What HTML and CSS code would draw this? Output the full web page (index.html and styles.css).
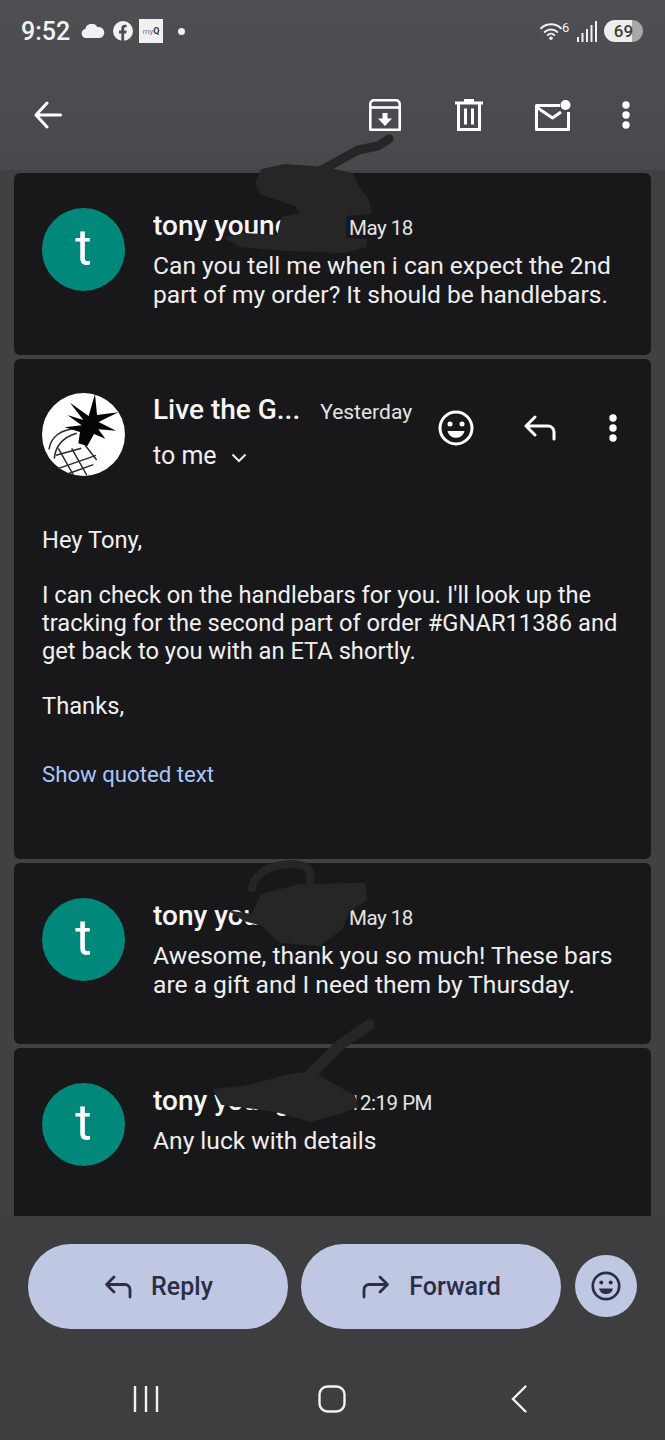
FILE: index.html
```html
<!DOCTYPE html>
<html lang="en">
<head>
<meta charset="utf-8">
<title>Email thread</title>
<link rel="stylesheet" href="styles.css">
</head>
<body>
<div class="screen">
  <header class="top">
    <div class="status">
      <span class="clock">9:52</span>
      <svg class="ic-cloud" viewBox="0 0 24 14"><path fill="#f2f2f2" d="M5 14a4.600 4.600 0 0 1-.6-9.100A6.400 6.400 0 0 1 16.300 3.100 5.600 5.600 0 0 1 19 14z"/></svg>
      <svg class="ic-fb" viewBox="0 0 20 20"><circle cx="10" cy="10" r="10" fill="#f2f2f2"/><path fill="#4d4d52" d="M8.300 20v-7.500H6V9.600h2.300V7.500c0-2.500 1.400-3.700 3.500-3.700.9 0 1.900.2 1.900.2v2.300h-1.100c-1.100 0-1.500.7-1.500 1.400v1.900h2.500l-.4 2.900h-2.100V20z"/></svg>
      <span class="myq"><span class="myq-a">my</span><span class="myq-b">Q</span></span>
      <span class="dot"></span>
      <span class="status-gap"></span>
      <svg class="ic-wifi" viewBox="0 0 24 20"><g fill="none" stroke="#f2f2f2" stroke-width="2.200" stroke-linecap="round"><path d="M1 7a16 16 0 0 1 22 0"/><path d="M5 11a10.500 10.500 0 0 1 14 0"/><path d="M8.500 14.500a5 5 0 0 1 7 0"/></g><circle cx="12" cy="18" r="2" fill="#f2f2f2"/></svg>
      <span class="wifi-num">6</span>
      <svg class="ic-signal" viewBox="0 0 20 21"><g fill="#f2f2f2"><rect x="0" y="16" width="2" height="5"/><rect x="4.500" y="12" width="2" height="9"/><rect x="9" y="8" width="2" height="13"/><rect x="13.500" y="4" width="2" height="17"/><rect x="18" y="0" width="2" height="21"/></g></svg>
      <span class="battery">69</span>
    </div>
    <div class="toolbar">
      <svg class="tool-back" viewBox="0 0 28 28"><path fill="none" stroke="#fff" stroke-width="3" stroke-linecap="round" stroke-linejoin="round" d="M26.500 14H2.500M13 2 2 14l11 12"/></svg>
      <span class="tool-fill"></span>
      <svg class="tool-archive" viewBox="0 0 32 32"><g fill="none" stroke="#fff" stroke-width="2.600" stroke-linejoin="round"><path d="M1.300 5a3.700 3.700 0 0 1 3.700-3.700h22A3.700 3.700 0 0 1 30.700 5v25.700H1.300z"/><path d="M1.300 8.500h29.400"/></g><path fill="#fff" d="M13.500 14h5v5.500h4.500L16 27l-7-7.500h4.500z"/></svg>
      <svg class="tool-trash" viewBox="0 0 28 32"><g fill="none" stroke="#fff" stroke-width="3"><path d="M3.500 5v25.500h21V5"/><path d="M0 4h28"/><path d="M10.500 9.500v16M17.500 9.500v16"/></g><rect x="9" y="0" width="10" height="4" fill="#fff"/></svg>
      <svg class="tool-mail" viewBox="0 0 36 31"><g fill="none" stroke="#fff" stroke-width="3" stroke-linejoin="round"><path d="M25 5.500H1.500v24h32V12"/><path d="M2 7.500 17.500 18 26 12"/></g><circle cx="30.500" cy="5" r="5" fill="#fff"/></svg>
      <svg class="tool-more" viewBox="0 0 8 28"><g fill="#fff"><circle cx="4" cy="4" r="3.700"/><circle cx="4" cy="14" r="3.700"/><circle cx="4" cy="24" r="3.700"/></g></svg>
    </div>
  </header>

  <main class="thread">
    <article class="card card-a">
      <div class="avatar">t</div>
      <div class="content">
        <div class="head"><span class="name name-fixed">tony young</span><span class="when">May 18</span></div>
        <p class="snippet">Can you tell me when i can expect the 2nd part of my order? It should be handlebars.</p>
      </div>
    </article>

    <article class="card card-open">
      <div class="open-head">
        <svg class="avatar-img" viewBox="36 39 249 249">
          <circle cx="160.500" cy="163.500" r="124.500" fill="#fff"/>
          <g fill="none" stroke="#2a2a2a" stroke-width="4.500">
            <path d="M57 208C62 172 92 146 142 146"/>
            <path d="M73 236C76 198 100 172 140 160"/>
            <path d="M78 226 154 205M84 266 198 226M112 282 190 254"/>
            <path d="M85 205 130 285M125 205 170 285M165 195 200 240"/>
          </g>
          <path fill="#050505" d="M195 42 201 105 265 97 206 126 258 152 205 148 226 176 192 162 172 198 145 190 150 156 104 142 155 136 112 105 160 120 120 68 176 108z"/>
        </svg>
        <div class="open-text">
          <div class="head-open"><span class="name">Live the G...</span><span class="when when-open">Yesterday</span></div>
          <div class="to-me">to me
            <svg class="chev" viewBox="0 0 16 10"><path fill="none" stroke="#eee" stroke-width="2" d="M1.500 1.500 8 8l6.500-6.500"/></svg>
          </div>
        </div>
        <svg class="open-emoji" viewBox="0 0 36 36"><circle cx="18" cy="18" r="16" fill="none" stroke="#fff" stroke-width="3"/><circle cx="12" cy="14" r="2.500" fill="#fff"/><circle cx="24" cy="14" r="2.500" fill="#fff"/><path fill="#fff" d="M9.500 21h17a8.700 8.700 0 0 1-17 0z"/></svg>
        <svg class="open-reply" viewBox="0 0 32 26"><path fill="none" stroke="#fff" stroke-width="3" stroke-linecap="round" stroke-linejoin="round" d="M11 2 2 11l9 9M2 11h22a6 6 0 0 1 6 6v7"/></svg>
        <svg class="open-more" viewBox="0 0 8 28"><g fill="#fff"><circle cx="4" cy="4" r="3.700"/><circle cx="4" cy="14" r="3.700"/><circle cx="4" cy="24" r="3.700"/></g></svg>
      </div>
      <div class="message">
        <p class="para">Hey Tony,</p>
        <p class="para">I can check on the handlebars for you. I'll look up the tracking for the second part of order #GNAR11386 and get back to you with an ETA shortly.</p>
        <p class="para">Thanks,</p>
        <p class="quoted">Show quoted text</p>
      </div>
    </article>

    <article class="card card-c">
      <div class="avatar">t</div>
      <div class="content">
        <div class="head"><span class="name name-fixed">tony young</span><span class="when">May 18</span></div>
        <p class="snippet">Awesome, thank you so much! These bars are a gift and I need them by Thursday.</p>
      </div>
    </article>

    <article class="card card-d">
      <div class="avatar">t</div>
      <div class="content">
        <div class="head"><span class="name name-fixed">tony young</span><span class="when">12:19 PM</span></div>
        <p class="snippet">Any luck with details</p>
      </div>
    </article>
  </main>

  <section class="actions">
    <button class="pill"><svg class="pill-ic" viewBox="0 0 28 26"><path fill="none" stroke="#2a2f45" stroke-width="2.800" stroke-linecap="round" stroke-linejoin="round" d="M10 3 2.500 10.500 10 18M3 10.500h18a5 5 0 0 1 5 5V23"/></svg>Reply</button>
    <button class="pill"><svg class="pill-ic" viewBox="0 0 28 26"><path fill="none" stroke="#2a2f45" stroke-width="2.800" stroke-linecap="round" stroke-linejoin="round" d="M18 3l7.500 7.500L18 18M25 10.500H7a5 5 0 0 0-5 5V23"/></svg>Forward</button>
    <div class="emoji-btn"><svg class="emoji-ic" viewBox="0 0 30 30"><circle cx="15" cy="15" r="13.200" fill="none" stroke="#2a2f45" stroke-width="2.700"/><circle cx="10.300" cy="11.500" r="2" fill="#2a2f45"/><circle cx="19.700" cy="11.500" r="2" fill="#2a2f45"/><path fill="#2a2f45" d="M8 17.500h14a7.200 7.200 0 0 1-14 0z"/></svg></div>
  </section>

  <nav class="navbar">
    <svg class="nav-recent" viewBox="0 0 26 28"><path stroke="#f2f2f2" stroke-width="2.400" d="M2 1v26M13 1v26M24 1v26"/></svg>
    <svg class="nav-home" viewBox="0 0 28 28"><rect x="1.500" y="1.500" width="25" height="25" rx="8" fill="none" stroke="#f2f2f2" stroke-width="2.400"/></svg>
    <svg class="nav-back" viewBox="0 0 16 28"><path fill="none" stroke="#f2f2f2" stroke-width="2.400" stroke-linecap="round" d="M14.500 1.500 2 14l12.500 12.500"/></svg>
  </nav>

  <svg class="scribble" viewBox="0 0 665 1440" aria-hidden="true">
    <g fill="#262627" stroke="#262627" stroke-linecap="round" stroke-linejoin="round">
      <path fill="none" stroke-width="9" d="M389 139 378 146 358 150 322 170 300 176"/>
      <path stroke-width="2" d="M262 170 285 165 325 168 352 174 358 187 368 200 371 213 346 215 345 239 366 240 366 246 345 252 285 250 240 246 226 238 245 234 278 236 282 218 300 214 296 205 262 194 256 184z"/>
      <path fill="none" stroke-width="8" d="M252 888C256 868 284 860 304 866 318 872 306 905 296 915"/>
      <path stroke-width="2" d="M252 915 262 895 300 885 364 884 366 900 348 912 342 928 320 945 280 942 262 925 244 920 232 912z"/>
      <path fill="none" stroke-width="11" d="M369 1025 340 1045 310 1075"/>
      <path stroke-width="2" d="M214 1090 250 1086 285 1076 312 1072 334 1085 354 1096 358 1106 340 1113 310 1121 280 1112 255 1108 222 1104z"/>
    </g>
  </svg>
</div>
</body>
</html>
```
FILE: styles.css
```css
* { box-sizing: border-box; }
html, body { margin: 0; padding: 0; background: #3e3e40; }
body { font-family: Roboto, "Liberation Sans", sans-serif; color: #eeeeee; }
p { margin: 0; }

.screen { position: relative; width: 665px; height: 1440px; overflow: hidden; display: flex; flex-direction: column; background: #3e3e40; }

.top { height: 170px; flex: none; background: linear-gradient(#4e4e53, #49494d); }
.status { height: 62px; display: flex; align-items: center; padding: 0 22px 0 21px; }
.clock { font-size: 25px; font-weight: 500; color: #f2f2f2; width: 50px; }
.ic-cloud { width: 24px; height: 14px; margin-left: 10px; }
.ic-fb { width: 20px; height: 20px; margin-left: 8px; }
.myq { width: 24px; height: 24px; margin-left: 6px; background: #f1f1f1; display: flex; align-items: center; justify-content: center; font-size: 8px; color: #777; }
.myq-b { color: #333; font-weight: 700; font-size: 9px; }
.dot { width: 7px; height: 7px; border-radius: 50%; background: #f1f1f1; margin-left: 15px; }
.status-gap { flex: 1; }
.ic-wifi { width: 22px; height: 18px; }
.wifi-num { font-size: 13px; color: #f2f2f2; align-self: flex-start; margin-top: 20px; width: 14px; }
.ic-signal { width: 20px; height: 21px; margin-left: 1px; }
.battery { width: 39px; height: 22px; margin-left: 7px; border-radius: 11px; background: linear-gradient(90deg, #eeeeee 72%, #a8a8a8 72%); color: #3c3c3c; font-size: 17px; font-weight: 500; text-align: center; line-height: 22px; }

.toolbar { display: flex; align-items: center; height: 72px; padding: 0 35px 0 34px; margin-top: 17px; }
.tool-fill { flex: 1; }
.tool-back { width: 28px; height: 28px; }
.tool-archive { width: 32px; height: 32px; }
.tool-trash { width: 28px; height: 32px; margin-left: 54px; }
.tool-mail { width: 36px; height: 31px; margin-left: 52px; }
.tool-more { width: 8px; height: 28px; margin-left: 51px; }

.thread { flex: 1; min-height: 0; overflow: hidden; padding: 3px 14px 0; display: flex; flex-direction: column; gap: 4px; background: #414144; }
.card { flex: none; background: #18181b; border-radius: 6px; padding: 35px 28px 0; display: flex; gap: 28px; }
.card-a { height: 182px; }
.card-c { height: 181px; }
.card-d { height: 172px; border-radius: 6px 6px 0 0; }
.avatar { flex: none; width: 83px; height: 83px; border-radius: 50%; background: #00897b; color: #fff; font-size: 50px; text-align: center; line-height: 80px; }
.content { flex: 1; min-width: 0; }
.head { display: flex; align-items: baseline; height: 41px; padding-top: 1px; }
.name { font-size: 28px; font-weight: 500; color: #f5f5f5; white-space: nowrap; }
.name-fixed { width: 196px; overflow: hidden; }
.when { font-size: 20.500px; letter-spacing: -0.5px; color: #e4e4e4; white-space: nowrap; }
.snippet { font-size: 24.600px; line-height: 29px; color: #eeeeee; margin-top: 2px; }

.card-open { height: 500px; display: block; padding-top: 34px; }
.open-head { display: flex; align-items: flex-start; }
.avatar-img { flex: none; width: 83px; height: 83px; }
.open-text { flex: none; width: 285px; margin-left: 28px; }
.head-open { display: flex; align-items: baseline; height: 38px; }
.when-open { font-size: 21px; letter-spacing: 0; margin-left: 20px; }
.to-me { font-size: 25px; margin-top: 10px; display: flex; align-items: center; gap: 14px; }
.chev { width: 16px; height: 10px; margin-top: 4px; }
.open-emoji { flex: none; width: 36px; height: 36px; margin: 17px 0 0 0; }
.open-reply { flex: none; width: 32px; height: 26px; margin: 22px 0 0 50px; }
.open-more { flex: none; width: 8px; height: 28px; margin: 21px 0 0 53px; }
.message { margin-top: 50px; font-size: 23.700px; line-height: 28px; color: #f0f0f0; }
.para { margin-bottom: 27px; }
.quoted { color: #a8c7fa; margin-top: 40px; font-size: 22.200px; }

.actions { flex: none; height: 141px; display: flex; align-items: flex-start; gap: 13px; padding: 28px 28px 0; }
.pill { width: 260px; height: 85px; border: 0; border-radius: 43px; background: #c0c7e2; color: #2a2f45; font-family: inherit; font-size: 25px; font-weight: 500; display: flex; align-items: center; justify-content: center; gap: 19px; padding: 0 0 0 1px; }
.pill-ic { width: 28px; height: 26px; }
.emoji-btn { width: 62px; height: 62px; margin: 11px 0 0 1px; border-radius: 50%; background: #c0c7e2; display: flex; align-items: center; justify-content: center; }
.emoji-ic { width: 30px; height: 30px; }

.navbar { flex: none; height: 83px; position: relative; display: flex; align-items: flex-start; padding: 28px 0 0 133px; }
.nav-recent { width: 26px; height: 28px; }
.nav-home { width: 28px; height: 28px; margin-left: 159px; }
.nav-back { width: 16px; height: 28px; margin-left: 165px; }

.scribble { position: absolute; left: 0; top: 0; width: 665px; height: 1440px; pointer-events: none; }
```
